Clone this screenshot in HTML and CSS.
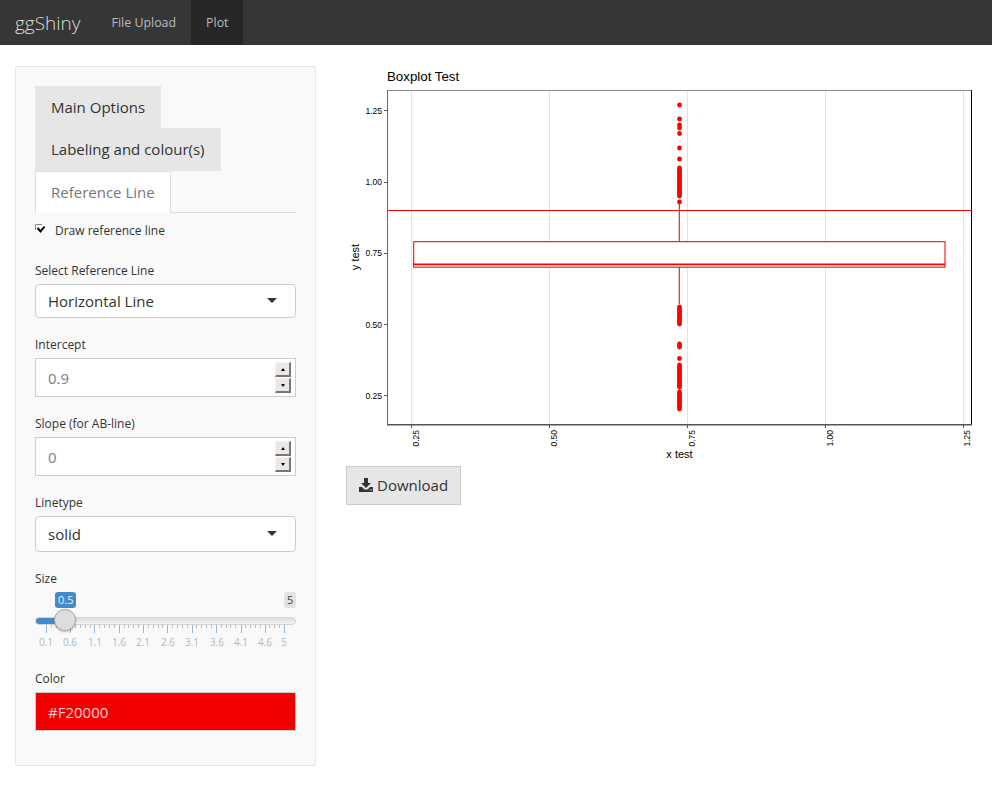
FILE: index.html
```html
<!DOCTYPE html>
<html lang="en">
<head>
  <meta charset="UTF-8" />
  <title>ggShiny</title>
  <meta name="viewport" content="width=device-width, initial-scale=1" />
  <link rel="stylesheet" href="styles.css">
</head>
<body>
  <nav class="navbar">
    <span class="brand">ggShiny</span>
    <a class="nav-link">File Upload</a>
    <a class="nav-link active">Plot</a>
  </nav>

  <div class="page">
    <aside class="well">
      <div class="tabs">
        <a class="tab">Main Options</a>
        <a class="tab">Labeling and colour(s)</a>
        <a class="tab current">Reference Line</a>
      </div>

      <div class="check-row">
        <svg class="check" width="11" height="11" viewBox="0 0 11 11">
          <path d="M0.5 6V0.5H7" fill="none" stroke="#888"/>
          <path d="M2.5 4L5.5 7.5L9.5 2.5" fill="none" stroke="#000" stroke-width="2"/>
        </svg>
        <span>Draw reference line</span>
      </div>

      <div class="field first">
        <label>Select Reference Line</label>
        <div class="select short">Horizontal Line<i class="caret"></i></div>
      </div>

      <div class="field">
        <label>Intercept</label>
        <div class="number">
          <input type="text" value="0.9">
          <div class="spinner">
            <span class="spin"><i class="up"></i></span>
            <span class="spin"><i class="down"></i></span>
          </div>
        </div>
      </div>

      <div class="field">
        <label>Slope (for AB-line)</label>
        <div class="number">
          <input type="text" value="0">
          <div class="spinner">
            <span class="spin"><i class="up"></i></span>
            <span class="spin"><i class="down"></i></span>
          </div>
        </div>
      </div>

      <div class="field">
        <label>Linetype</label>
        <div class="select">solid<i class="caret"></i></div>
      </div>

      <div class="field">
        <label>Size</label>
        <div class="slider">
          <span class="bubble from">0.5</span>
          <span class="bubble to">5</span>
          <div class="track"><div class="track-fill"></div></div>
          <span class="handle"></span>
          <svg class="ticks" width="261" height="27" viewBox="35 625 261 27">
            <path class="minor" d="M51.5 625v3M56.5 625v3M61.5 625v3M65.5 625v3M75.5 625v3M80.5 625v3M85.5 625v3M90.5 625v3M99.5 625v3M104.5 625v3M109.5 625v3M114.5 625v3M124.5 625v3M128.5 625v3M133.5 625v3M138.5 625v3M148.5 625v3M153.5 625v3M158.5 625v3M162.5 625v3M172.5 625v3M177.5 625v3M182.5 625v3M187.5 625v3M196.5 625v3M201.5 625v3M206.5 625v3M211.5 625v3M221.5 625v3M226.5 625v3M230.5 625v3M235.5 625v3M245.5 625v3M250.5 625v3M255.5 625v3M260.5 625v3M269.5 625v3M274.5 625v3M279.5 625v3"/>
            <path class="major" d="M46.5 625v8M70.5 625v8M94.5 625v8M119.5 625v8M143.5 625v8M167.5 625v8M192.5 625v8M216.5 625v8M241.5 625v8M265.5 625v8M284.5 625v8"/>
            <g class="tick-labels">
              <text x="46" y="646">0.1</text>
              <text x="70" y="646">0.6</text>
              <text x="95" y="646">1.1</text>
              <text x="119" y="646">1.6</text>
              <text x="143" y="646">2.1</text>
              <text x="168" y="646">2.6</text>
              <text x="192" y="646">3.1</text>
              <text x="217" y="646">3.6</text>
              <text x="241" y="646">4.1</text>
              <text x="265" y="646">4.6</text>
              <text x="284" y="646">5</text>
            </g>
          </svg>
        </div>
      </div>

      <div class="field last">
        <label>Color</label>
        <div class="color">#F20000</div>
      </div>
    </aside>

    <main class="main">
      <svg class="plot" width="630" height="396" viewBox="346 66 630 396">
        <text class="plot-title" x="387" y="81">Boxplot Test</text>

        <g class="grid">
          <path d="M411.5 90V425M549.5 90V425M687.5 90V425M825.5 90V425M963.5 90V425"/>
        </g>

        <!-- box -->
        <g class="box">
          <path d="M679.3 204V242M679.3 267V304"/>
          <rect x="413.7" y="241.7" width="531.3" height="25.5"/>
          <path class="median" d="M413 264.3H945"/>
        </g>

        <!-- outliers -->
        <g class="dots">
          <circle cx="679.5" cy="105" r="2.4"/>
          <circle cx="679.5" cy="119" r="2.4"/>
          <circle cx="679.5" cy="125" r="2.4"/>
          <circle cx="679.5" cy="128" r="2.4"/>
          <circle cx="679.5" cy="133.5" r="2.4"/>
          <circle cx="679.5" cy="148" r="2.4"/>
          <circle cx="679.5" cy="159" r="2.4"/>
          <circle cx="679.5" cy="202" r="2.4"/>
          <circle cx="679.5" cy="358.5" r="2.4"/>
          <path d="M679.5 168V196M679.5 307V324M679.5 344V347M679.5 365V387M679.5 392V409"/>
        </g>

        <path class="ref-line" d="M387 210.5H971"/>

        <path class="frame-top" d="M387 90.5H972"/>
        <path class="frame-left" d="M387.5 90V425"/>
        <path class="frame-right" d="M971.5 90V425"/>
        <path class="frame-bottom" d="M387 424.8H972"/>
        <path class="axis-ticks" d="M384 110.5H387M384 182.5H387M384 253.5H387M384 324.5H387M384 395.5H387M411.5 425V428M549.5 425V428M687.5 425V428M825.5 425V428M963.5 425V428"/>

        <g class="axis-y">
          <text x="382" y="113.5">1.25</text>
          <text x="382" y="185">1.00</text>
          <text x="382" y="256">0.75</text>
          <text x="382" y="327.5">0.50</text>
          <text x="382" y="398.5">0.25</text>
        </g>
        <g class="axis-x">
          <text transform="translate(419 430) rotate(-90)">0.25</text>
          <text transform="translate(557 430) rotate(-90)">0.50</text>
          <text transform="translate(695 430) rotate(-90)">0.75</text>
          <text transform="translate(833 430) rotate(-90)">1.00</text>
          <text transform="translate(970 430) rotate(-90)">1.25</text>
        </g>
        <text class="axis-name" x="679.5" y="458" text-anchor="middle">x test</text>
        <text class="axis-name" transform="translate(359 257) rotate(-90)" text-anchor="middle">y test</text>
      </svg>

      <a class="btn">
        <svg width="14" height="14" viewBox="0 0 14 14">
          <path d="M5 0H9V5H12L7 10L2 5H5Z" fill="#333"/>
          <path d="M0 9H3L5.5 11.5H8.5L11 9H14V14H0Z" fill="#333"/>
          <path d="M10.5 12H11.5M12.2 12H13.2" stroke="#e6e6e6"/>
        </svg>
        Download
      </a>
    </main>
  </div>
</body>
</html>
```

FILE: styles.css
```css
body{
  margin:0;background:#fff;color:#333;
  font-family:"Open Sans",sans-serif;font-size:12px;
}

/* navbar */
.navbar{
  display:flex;align-items:stretch;height:45px;margin-bottom:21px;
  background:#363636;color:#ccc;
}
.brand{padding:0 16px 0 15px;font-size:19px;font-weight:300;line-height:46px;color:#ddd;}
.nav-link{padding:0 15px;font-size:12.4px;line-height:45px;color:#bbb;}
.nav-link.active{box-sizing:border-box;width:52px;background:#272727;}

/* layout */
.page{display:grid;grid-template-columns:301px 1fr;column-gap:30px;padding:0 15px;}
.well{
  padding:19px;background:#f9f9f9;border:1px solid #e6e6e6;border-radius:2px;
}

/* tabs */
.tabs{display:flex;flex-direction:column;align-items:flex-start;border-bottom:1px solid #ddd;font-size:15px;}
.tab{padding:0 16px;height:42px;line-height:43px;background:#e6e6e6;color:#333;}
.tab:nth-child(2){height:43px;}
.tab.current{
  box-sizing:border-box;margin-bottom:-1px;padding:0 15px;background:#fff;color:#777;height:42px;
  line-height:40px;border:1px solid #ddd;border-bottom:none;
}

.check-row{display:flex;align-items:center;gap:9px;height:20px;margin-top:7px;color:#333;}
.check{flex:none;margin-top:-2px;}

/* form fields */
.field{margin-top:18px;}
.field.first{margin-top:22px;}
.field.last{margin-bottom:15px;}
.field label{display:block;height:17px;line-height:17px;margin-bottom:5px;}

.select{
  display:flex;align-items:center;justify-content:space-between;box-sizing:border-box;
  height:36px;padding:0 18px 0 12px;font-size:15px;color:#333;
  background:#fff;border:1px solid #ccc;border-radius:4px;
}
.select.short{height:34px;}
.caret{
  width:0;height:0;margin-top:-2px;
  border-left:5px solid transparent;border-right:5px solid transparent;border-top:5px solid #333;
}

.number{
  display:flex;align-items:center;box-sizing:border-box;height:39px;
  padding:0 4px 0 12px;background:#fff;border:1px solid #ccc;
}
.number input{
  flex:1;min-width:0;padding:0;border:none;outline:none;background:none;
  font-family:inherit;font-size:15px;color:#808080;
}
.spinner{display:flex;flex-direction:column;gap:1px;}
.spin{
  display:flex;align-items:center;justify-content:center;box-sizing:border-box;
  width:16px;height:15px;background:#ece9e4;
  border:1px solid;border-color:#f5f3f0 #777 #777 #f5f3f0;
  border-right-width:2px;border-bottom-width:2px;
}
.up{width:0;height:0;border-left:2.5px solid transparent;border-right:2.5px solid transparent;border-bottom:3px solid #000;}
.down{width:0;height:0;border-left:2.5px solid transparent;border-right:2.5px solid transparent;border-top:3px solid #000;}

/* slider */
.slider{position:relative;height:60px;padding-top:25px;box-sizing:border-box;}
.bubble{
  position:absolute;top:0;height:16px;line-height:16px;padding:0 3px;
  font-size:11px;text-align:center;border-radius:3px;
}
.bubble.from{left:20px;width:15px;background:#428bca;color:#e8f0f8;}
.bubble.to{right:0;width:6px;background:#e3e3e3;color:#444;}
.track{
  height:8px;box-sizing:border-box;border-radius:4px;overflow:hidden;
  border:1px solid #d4d4d4;background:linear-gradient(#ddd,#f2f2f2);
}
.track-fill{width:30px;height:8px;margin:-1px;background:#428bca;}
.handle{
  position:absolute;left:19px;top:17px;width:22px;height:22px;box-sizing:border-box;
  background:#ddd;border:1px solid #aaa;border-radius:50%;box-shadow:0 1px 2px rgba(0,0,0,.25);
}
.ticks{display:block;}
.minor{stroke:#bbb;stroke-width:1;fill:none;shape-rendering:crispEdges;}
.major{stroke:#8dbde6;stroke-width:1;fill:none;shape-rendering:crispEdges;}
.tick-labels text{font-size:10px;fill:#b2b8bf;text-anchor:middle;}

.color{
  box-sizing:border-box;height:39px;line-height:39px;padding-left:12px;
  font-size:15px;color:#f6d0d0;background:#F20000;border:1px solid #ccc;
}

/* plot */
.plot{display:block;font-family:"Liberation Sans",Arial,sans-serif;}
.plot-title{font-size:13.3px;fill:#000;}
.grid path{stroke:#e2e2e2;fill:none;}
.box path,.box rect{stroke:#f00;stroke-width:1.07;fill:#fff;}
.box .median{stroke:#f00;stroke-width:1.8;fill:none;}
.dots circle{fill:#f00;}
.dots path{stroke:#f00;stroke-width:4.8;stroke-linecap:round;fill:none;}
.ref-line{stroke:#f00;stroke-width:1;fill:none;}
.frame-top{stroke:#8a8a8a;fill:none;}
.frame-left{stroke:#666;fill:none;}
.frame-right{stroke:#000;fill:none;}
.frame-bottom{stroke:#555;stroke-width:1.4;fill:none;}
.axis-ticks{stroke:#555;stroke-width:1;fill:none;}
.axis-y text{font-size:8.5px;fill:#000;text-anchor:end;}
.axis-x text{font-size:8.5px;fill:#000;text-anchor:end;}
.axis-name{font-size:11px;fill:#000;}

.main{min-width:0;}
.btn{
  display:inline-flex;align-items:center;gap:4px;box-sizing:border-box;
  height:39px;margin-top:4px;padding:0 12px 2px;font-size:15px;color:#333;
  background:#e6e6e6;border:1px solid #ccc;
}
```
